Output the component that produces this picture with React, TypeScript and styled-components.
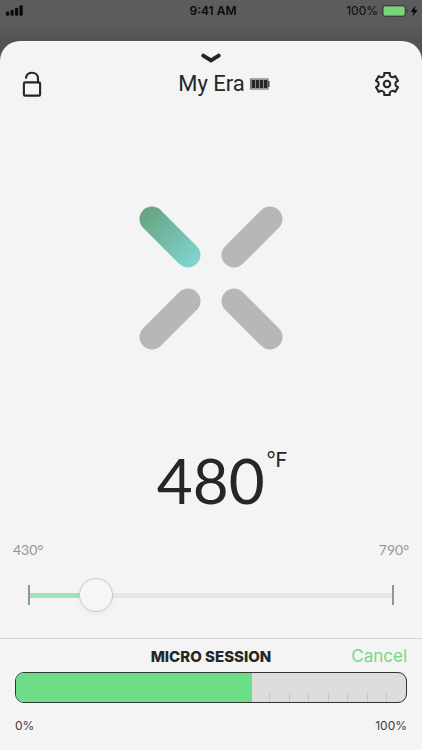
import React, { useState } from "react";
import styled, { createGlobalStyle } from "styled-components";

const GlobalStyle = createGlobalStyle`
  *, *::before, *::after { box-sizing: border-box; }
  body { margin: 0; background: #5b5b5b; color: #262626; font-family: Inter, "Liberation Sans", sans-serif; }
  button { font: inherit; color: inherit; background: none; border: 0; padding: 0; cursor: pointer; }
  svg { display: block; }
`;

const Screen = styled.div`
  min-height: 100vh;
  display: flex;
  flex-direction: column;
`;

const StatusBar = styled.header`
  display: grid;
  grid-template-columns: 1fr auto 1fr;
  align-items: center;
  height: 41px;
  padding: 0 4px 20px 6px;
  color: #0a0a0a;
  font-size: 12px;
  background: linear-gradient(#5c5c5c 60%, #525252);
`;

const Clock = styled.time`
  font-weight: 600;
  padding-left: 2px;
`;

const PowerStatus = styled.div`
  display: flex;
  justify-content: flex-end;
  align-items: center;
  gap: 4px;
`;

const Backdrop = styled.div`
  flex: 1;
  display: flex;
  background: #525252;
`;

const Sheet = styled.main`
  flex: 1;
  display: flex;
  flex-direction: column;
  background: #f4f4f4;
  border-radius: 20px 20px 0 0;
`;

const CollapseButton = styled.button`
  align-self: center;
  padding: 12px 8px 7px;
`;

const TitleBar = styled.div`
  display: grid;
  grid-template-columns: 1fr auto 1fr;
  align-items: center;
  height: 28px;
  padding: 0 22px 0 20px;
`;

const IconButton = styled.button<{ $end?: boolean }>`
  justify-self: ${(p) => (p.$end ? "end" : "start")};
`;

const Title = styled.h1`
  display: flex;
  align-items: center;
  gap: 5px;
  margin: 0;
  padding-left: 28px;
  font-family: Roboto, sans-serif;
  font-size: 22px;
  font-weight: 400;
  line-height: 28px;
`;

const Petals = styled.div`
  flex: 1;
  display: flex;
  justify-content: center;
  align-items: center;
  padding-top: 12px;
`;

const Readout = styled.output`
  display: flex;
  justify-content: center;
  align-items: flex-start;
  padding-left: 22px;
  font-family: Lato, sans-serif;
  font-size: 62px;
  line-height: 68px;
`;

const Unit = styled.span`
  padding-left: 2px;
  font-size: 21px;
  line-height: 26px;
`;

const RangeLabels = styled.div`
  display: flex;
  justify-content: space-between;
  padding: 26px 13px 0;
  color: #969696;
  font-family: Lato, sans-serif;
  font-size: 14px;
  line-height: 20px;
`;

const SliderRow = styled.div`
  display: flex;
  align-items: center;
  margin: 18px 28px 26px;
  height: 34px;
`;

const EndStop = styled.span`
  width: 2px;
  height: 20px;
  background: #949494;
`;

const Slider = styled.input<{ $fill: number }>`
  appearance: none;
  flex: 1;
  min-width: 0;
  height: 34px;
  margin: 0;
  background: transparent;
  cursor: pointer;
  &::-webkit-slider-runnable-track {
    height: 5px;
    background: linear-gradient(to right, #9ee5b4 ${(p) => p.$fill}%, #e7e7e7 ${(p) => p.$fill}%);
  }
  &::-webkit-slider-thumb {
    appearance: none;
    width: 34px;
    height: 34px;
    margin-top: -15px;
    border: 1px solid #c8c8c8;
    border-radius: 50%;
    background: #f6f6f6;
    box-shadow: 0 2px 6px rgba(0, 0, 0, 0.04);
  }
`;

const Session = styled.section`
  border-top: 1px solid #d4d4d4;
  padding: 5px 15px 15px;
`;

const SessionHeader = styled.div`
  display: grid;
  grid-template-columns: 1fr auto 1fr;
  align-items: start;
  height: 28px;
`;

const SessionTitle = styled.h2`
  grid-column: 2;
  margin: 0;
  font-size: 15px;
  font-weight: 800;
  line-height: 26px;
`;

const CancelButton = styled.button`
  && {
    justify-self: end;
    color: #6fda88;
    font-size: 17px;
    line-height: 24px;
  }
`;

const Progress = styled.div`
  display: flex;
  height: 31px;
  border: 1px solid #333;
  border-radius: 9px;
  overflow: hidden;
  background: #dddddd;
`;

const ProgressFill = styled.div`
  background: #6cde87;
`;

const Ticks = styled.div`
  flex: 1;
  display: flex;
  justify-content: space-between;
  align-items: flex-end;
  padding: 0 19px 0 17px;
`;

const Tick = styled.span`
  width: 1px;
  height: 9px;
  background: #c8c8c8;
`;

const ProgressLabels = styled.div`
  display: flex;
  justify-content: space-between;
  margin-top: 14px;
  color: #3c3c3c;
  font-size: 12px;
  line-height: 18px;
`;

const SignalIcon = () => (
  <svg width="17" height="11" viewBox="0 0 17 11" fill="#0a0a0a" aria-label="Signal strength">
    <rect x="0" y="6.5" width="3.2" height="4.2" rx="1" />
    <rect x="4.5" y="4.8" width="3.2" height="5.9" rx="1" />
    <rect x="9" y="2.8" width="3.2" height="7.9" rx="1" />
    <rect x="13.5" y="0.3" width="3.2" height="10.4" rx="1" />
  </svg>
);

const ChargeIcon = () => (
  <svg width="36" height="12" viewBox="0 0 36 12">
    <rect x="0.6" y="0.6" width="23" height="10.8" rx="2.5" fill="#555" stroke="#3c3c3c" />
    <rect x="1.6" y="1.6" width="21" height="8.8" rx="1.5" fill="#78d67a" />
    <path d="M24.8 4c1.2.4 1.2 3.6 0 4z" fill="#303030" />
    <path d="M33.6 0.6l-5 6.3h3L30.5 11.400l5.200-6.500h-3.100z" fill="#080808" />
  </svg>
);

const ChevronIcon = () => (
  <svg width="20" height="10" viewBox="0 0 20 10">
    <path d="M2.3 2.6L10 7.500l7.7-4.900" fill="none" stroke="#262626" strokeWidth="4" strokeLinecap="round" />
  </svg>
);

const UnlockIcon = () => (
  <svg width="24" height="28" viewBox="0 0 24 28" fill="none" stroke="#262626" strokeWidth="2.1">
    <rect x="3.9" y="12.4" width="16.2" height="13.2" rx="1.2" />
    <path d="M6 7.8C6.600 4.400 9 2.8 12 2.8c3.500 0 6 2.300 6 5.600v4" strokeLinecap="round" />
  </svg>
);

const TEETH = Array.from({ length: 6 }, (_, i) => i * 60);
const gearPoint = (radius: number, degrees: number) => {
  const a = (degrees * Math.PI) / 180;
  return `${(13 + radius * Math.sin(a)).toFixed(2)} ${(13 - radius * Math.cos(a)).toFixed(2)}`;
};
const GEAR_PATH =
  TEETH.map((c, i) =>
    [
      i === 0 ? "M" : "L",
      gearPoint(11.4, c - 14),
      "L",
      gearPoint(11.4, c + 14),
      "L",
      gearPoint(9, c + 18),
      "Q",
      gearPoint(7.8, c + 30),
      gearPoint(9, c + 42),
    ].join(" ")
  ).join(" ") + "Z";

const GearIcon = () => (
  <svg width="26" height="26" viewBox="0 0 26 26" fill="none" stroke="#262626" strokeWidth="2.1" strokeLinejoin="round">
    <path d={GEAR_PATH} />
    <circle cx="13" cy="13" r="3.200" />
  </svg>
);

const BatteryIcon = () => (
  <svg width="20" height="12" viewBox="0 0 20 12">
    <rect x="0.5" y="0.900" width="17.500" height="10.200" fill="#b0b0b0" stroke="#777" />
    <path d="M18 3h1.500v6H18z" fill="#444" />
    {[1.6, 5.7, 9.8, 13.9].map((x) => (
      <rect key={x} x={x} y="2" width="3.400" height="8" fill="#262626" />
    ))}
  </svg>
);

const PetalLogo = () => (
  <svg width="144" height="144" viewBox="0 0 144 144" strokeWidth="25" strokeLinecap="round">
    <defs>
      <linearGradient id="petal" gradientUnits="userSpaceOnUse" x1="5" y1="8" x2="60" y2="58">
        <stop offset="0" stopColor="#69a483" />
        <stop offset="1" stopColor="#82d6d4" />
      </linearGradient>
    </defs>
    <path d="M13 13l36 36" stroke="url(#petal)" />
    <path d="M131 13L95 49M13 131l36-36M131 131L95 95" stroke="#b7b7b7" />
  </svg>
);

const MIN = 430;
const MAX = 790;

export default function App() {
  const [position, setPosition] = useState(484);
  const temperature = Math.round(position / 10) * 10;
  const fill = 5 + ((position - MIN) / (MAX - MIN)) * 90;

  return (
    <Screen>
      <GlobalStyle />
      <StatusBar>
        <SignalIcon />
        <Clock>9:41 AM</Clock>
        <PowerStatus>
          100%
          <ChargeIcon />
        </PowerStatus>
      </StatusBar>
      <Backdrop>
        <Sheet>
          <CollapseButton aria-label="Collapse">
            <ChevronIcon />
          </CollapseButton>
          <TitleBar>
            <IconButton aria-label="Unlocked">
              <UnlockIcon />
            </IconButton>
            <Title>
              My Era
              <BatteryIcon />
            </Title>
            <IconButton $end aria-label="Settings">
              <GearIcon />
            </IconButton>
          </TitleBar>
          <Petals>
            <PetalLogo />
          </Petals>
          <Readout htmlFor="temperature">
            {temperature}
            <Unit>°F</Unit>
          </Readout>
          <RangeLabels>
            <span>{MIN}°</span>
            <span>{MAX}°</span>
          </RangeLabels>
          <SliderRow>
            <EndStop />
            <Slider
              id="temperature"
              type="range"
              aria-label="Temperature"
              min={MIN}
              max={MAX}
              value={position}
              $fill={fill}
              onChange={(e) => setPosition(Number(e.target.value))}
            />
            <EndStop />
          </SliderRow>
          <Session>
            <SessionHeader>
              <SessionTitle id="session-title">MICRO SESSION</SessionTitle>
              <CancelButton>Cancel</CancelButton>
            </SessionHeader>
            <Progress role="progressbar" aria-labelledby="session-title" aria-valuemin={0} aria-valuemax={100} aria-valuenow={61}>
              <ProgressFill style={{ width: "60.6%" }} />
              <Ticks>
                {[65, 70, 75, 80, 85, 90, 95].map((t) => (
                  <Tick key={t} />
                ))}
              </Ticks>
            </Progress>
            <ProgressLabels>
              <span>0%</span>
              <span>100%</span>
            </ProgressLabels>
          </Session>
        </Sheet>
      </Backdrop>
    </Screen>
  );
}
